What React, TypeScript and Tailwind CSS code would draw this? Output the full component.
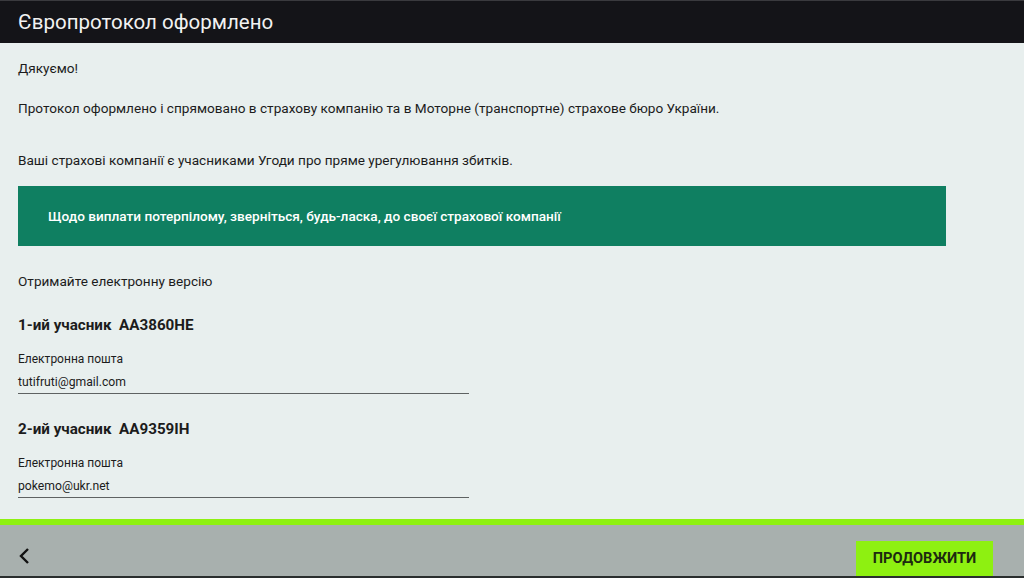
export default function App() {
  return (
    <div className="w-[1024px] h-[578px] flex flex-col bg-[#e8efee] font-['Roboto','Noto_Sans',sans-serif] text-[#1c1c1c] overflow-hidden">
      <div className="h-[43px] shrink-0 bg-[#141418] border-t border-[#3a3a3e] flex items-center px-[18px]">
        <h1 className="text-[20.5px] text-[#f2f2f2] font-normal">Європротокол оформлено</h1>
      </div>
      <div className="flex-1 px-[18px] pt-[16px] text-[13.6px]">
        <p className="leading-[18px]">Дякуємо!</p>
        <p className="leading-[18px] mt-[22px]">
          Протокол оформлено і спрямовано в страхову компанію та в Моторне (транспортне) страхове бюро України.
        </p>
        <p className="leading-[18px] mt-[34px]">Ваші страхові компанії є учасниками Угоди про пряме урегулювання збитків.</p>
        <div className="mt-[17px] w-[928px] h-[60px] bg-[#0f7f61] flex items-center px-[30px]">
          <p className="text-white font-medium text-[13.6px]">
            Щодо виплати потерпілому, зверніться, будь-ласка, до своєї страхової компанії
          </p>
        </div>
        <p className="leading-[18px] mt-[26px]">Отримайте електронну версію</p>
        <Participant title="1-ий учасник  AA3860HE" email="tutifruti@gmail.com" />
        <Participant title="2-ий учасник  AA9359IH" email="pokemo@ukr.net" />
      </div>
      <div className="h-[6px] shrink-0 bg-[#8ef011]" />
      <div className="h-[53px] shrink-0 bg-[#a8b0ae] flex items-end justify-between pl-[17px] pr-[31px] border-b-2 border-[#2a2e2e]">
        <button className="self-center mt-[10px] text-[#111]">
          <svg width="14" height="20" viewBox="0 0 14 20" fill="none" stroke="currentColor" strokeWidth="2.4">
            <path d="M11 3 L4 10 L11 17" />
          </svg>
        </button>
        <button className="w-[137px] h-[35px] bg-[#8ef011] text-[14.6px] font-bold text-[#1d2a10]">
          ПРОДОВЖИТИ
        </button>
      </div>
    </div>
  );
}

function Participant({ title, email }: { title: string; email: string }) {
  return (
    <div className="mt-[26px]">
      <p className="text-[15.2px] font-bold leading-[18px] whitespace-pre">{title}</p>
      <p className="text-[12px] leading-[16px] mt-[17px]">Електронна пошта</p>
      <div className="w-[451px] border-b-[1.5px] border-[#5e6262] mt-[7px] pb-[2px]">
        <p className="text-[12.2px] leading-[17px]">{email}</p>
      </div>
    </div>
  );
}
